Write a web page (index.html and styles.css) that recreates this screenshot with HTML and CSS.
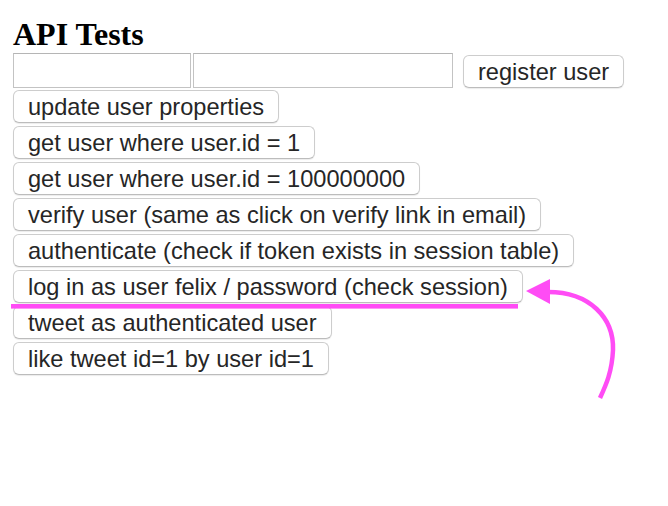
FILE: index.html
```html
<!DOCTYPE html>
<html lang="en">
<head>
<meta charset="utf-8">
<title>API Tests</title>
<link rel="stylesheet" href="styles.css">
</head>
<body>
<main class="page">
  <h1 class="title">API Tests</h1>
  <div class="stack">
    <div class="row">
      <input class="field field-name" type="text">
      <input class="field field-pass" type="text">
      <button class="btn btn-register">register user</button>
    </div>
    <button class="btn">update user properties</button>
    <button class="btn">get user where user.id = 1</button>
    <button class="btn">get user where user.id = 100000000</button>
    <button class="btn">verify user (same as click on verify link in email)</button>
    <button class="btn">authenticate (check if token exists in session table)</button>
    <button class="btn">log in as user felix / password (check session)</button>
    <button class="btn">tweet as authenticated user</button>
    <button class="btn">like tweet id=1 by user id=1</button>
  </div>
  <svg class="annotation" width="668" height="506" viewBox="0 0 668 506" aria-hidden="true">
    <rect x="11" y="304" width="507" height="4.6" fill="#ff4cf5"/>
    <path d="M548 292 C590 292, 614 318, 613 350 C612 372, 606 385, 600 398" fill="none" stroke="#ff4cf5" stroke-width="4.5" stroke-linecap="butt"/>
    <polygon points="526,291 550,279 550,304" fill="#ff4cf5"/>
  </svg>
</main>
</body>
</html>
```
FILE: styles.css
```css
html, body {
  margin: 0;
  padding: 0;
  background: #ffffff;
}

.page {
  position: relative;
  width: 668px;
  height: 506px;
  box-sizing: border-box;
  padding: 16px 13px 0 13px;
}

.title {
  margin: 0;
  font-family: "Liberation Serif", "Times New Roman", serif;
  font-weight: bold;
  font-size: 32px;
  line-height: 36px;
  color: #000;
}

.stack {
  display: flex;
  flex-direction: column;
  align-items: flex-start;
  margin-top: 1px;
}

.row {
  display: flex;
  align-items: flex-end;
}

.field {
  box-sizing: border-box;
  height: 35px;
  margin: 0;
  padding: 0 4px;
  border: 1px solid #c3c3c3;
  border-top-color: #b5b5b5;
  background: #fff;
  border-radius: 0;
  outline: none;
}

.field-name {
  width: 178px;
}

.field-pass {
  width: 260px;
  margin-left: 2px;
}

.btn {
  box-sizing: border-box;
  height: 33px;
  margin: 3px 0 0 0;
  padding: 2px 14px 0 14px;
  font-family: "Liberation Sans", Arial, sans-serif;
  font-size: 23.6px;
  line-height: 29px;
  color: #262626;
  background: #ffffff;
  border: 1px solid #cdcdcd;
  border-bottom-color: #bcbcbc;
  border-radius: 6px;
  box-shadow: 0 1px 1px rgba(0, 0, 0, 0.08);
  white-space: nowrap;
  cursor: default;
}

.row + .btn {
  margin-top: 2px;
}

.btn-register {
  margin: 0 0 0 10px;
}

.annotation {
  position: absolute;
  left: 0;
  top: 0;
  pointer-events: none;
}
```
